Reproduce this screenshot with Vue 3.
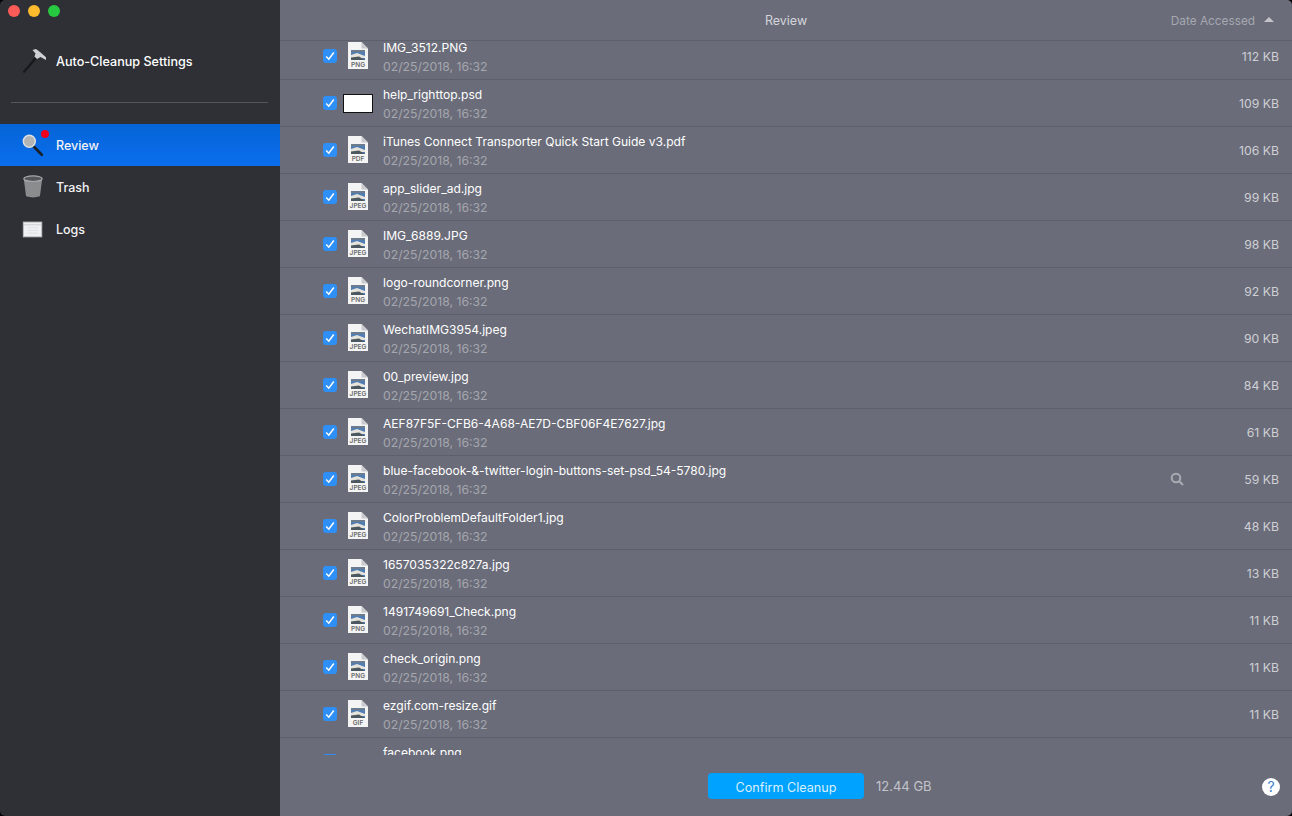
<template>
  <div class="window">
    <aside class="sidebar">
      <div class="traffic">
        <span class="light light--red"></span>
        <span class="light light--yellow"></span>
        <span class="light light--green"></span>
      </div>

      <div class="settings">
        <svg class="settings__icon" width="26" height="26" viewBox="0 0 26 26">
          <path d="M2.5 24 L4.5 25 L17 10.5 L15 9 Z" fill="#17181b" />
          <path d="M12.5 2 L16 1 L20 4 L27 10 L26 12 L20.5 9 L17 11 L14.5 8.5 L15.5 5.5 Z" fill="#cfd0d3" />
        </svg>
        <span>Auto-Cleanup Settings</span>
      </div>

      <div class="sidebar__line"></div>

      <nav class="nav">
        <div class="nav__item nav__item--active">
          <span class="nav__icon">
            <svg width="26" height="26" viewBox="0 0 26 26">
              <path d="M14 15 L22.5 23.5" stroke="#18202c" stroke-width="3" stroke-linecap="round" />
              <circle cx="9" cy="9" r="6.5" fill="#b2b4b6" stroke="#dfe0e2" stroke-width="1.5" />
            </svg>
            <span class="nav__badge"></span>
          </span>
          Review
        </div>
        <div class="nav__item">
          <span class="nav__icon">
            <svg width="26" height="26" viewBox="0 0 26 26">
              <path d="M3 4 L23 4 L20.5 23 Q13 25.5 5.5 23 Z" fill="#8b8c8e" />
              <ellipse cx="13" cy="4" rx="10" ry="3" fill="#55565a" stroke="#a9aaac" stroke-width="1.2" />
            </svg>
          </span>
          Trash
        </div>
        <div class="nav__item">
          <span class="nav__icon">
            <svg width="26" height="26" viewBox="0 0 26 26">
              <rect x="2.5" y="5.5" width="20" height="16" fill="#f1f1f3" stroke="#bdbec2" />
              <path d="M3 8.5 H22" stroke="#c8c9cd" />
              <path d="M7 11.5 H19 M7 14.5 H19 M7 17.5 H19" stroke="#dcdde0" />
            </svg>
          </span>
          Logs
        </div>
      </nav>
    </aside>

    <main class="main">
      <header class="head">
        <span class="head__title">Review</span>
        <span class="head__sort">
          Date Accessed
          <i class="head__arrow"></i>
        </span>
      </header>

      <div class="list">
        <div class="list__inner">
          <div class="row" v-for="file in files" :key="file.name">
            <span class="check">
              <svg width="10" height="10" viewBox="0 0 10 10">
                <path d="M1.2 5.5 L3.8 8.2 L8.8 1.5" fill="none" stroke="#fff" stroke-width="1.5" />
              </svg>
            </span>
            <span class="thumb">
              <span v-if="file.type === 'blank'" class="thumb__blank"></span>
              <svg v-else-if="file.type" width="20" height="27" viewBox="0 0 20 27">
                <path d="M0 0 H13.5 L20 6.5 V27 H0 Z" fill="#f4f4f5" />
                <path d="M13.5 0 L20 6.5 H13.5 Z" fill="#c9cace" />
                <rect x="3" y="8" width="14" height="10" fill="#4f7db4" />
                <path d="M3 8 H17 V10 H3 Z" fill="#6d7c8c" />
                <path d="M3 13 L9 11 L17 14 V16 H3 Z" fill="#e6e3da" />
                <path d="M3 15.5 L11 14.5 L17 18 H3 Z" fill="#4c5860" />
                <text x="10" y="24.5" text-anchor="middle" class="thumb__label">{{ file.type }}</text>
              </svg>
            </span>
            <div class="row__text">
              <div class="row__name">{{ file.name }}</div>
              <div class="row__date">02/25/2018, 16:32</div>
            </div>
            <svg v-if="file.hover" class="row__search" width="14" height="14" viewBox="0 0 14 14">
              <circle cx="6" cy="6" r="4.3" fill="none" stroke="#a9abb2" stroke-width="2" />
              <path d="M9.2 9.2 L13 13" stroke="#a9abb2" stroke-width="2.2" />
            </svg>
            <span class="row__size">{{ file.size }}</span>
          </div>
        </div>
      </div>

      <footer class="foot">
        <button class="confirm">Confirm Cleanup</button>
        <span class="foot__total">12.44 GB</span>
        <span class="help">?</span>
      </footer>
    </main>
  </div>
</template>

<script setup>
const files = [
  { name: 'IMG_3512.PNG', type: 'PNG', size: '112 KB' },
  { name: 'help_righttop.psd', type: 'blank', size: '109 KB' },
  { name: 'iTunes Connect Transporter Quick Start Guide v3.pdf', type: 'PDF', size: '106 KB' },
  { name: 'app_slider_ad.jpg', type: 'JPEG', size: '99 KB' },
  { name: 'IMG_6889.JPG', type: 'JPEG', size: '98 KB' },
  { name: 'logo-roundcorner.png', type: 'PNG', size: '92 KB' },
  { name: 'WechatIMG3954.jpeg', type: 'JPEG', size: '90 KB' },
  { name: '00_preview.jpg', type: 'JPEG', size: '84 KB' },
  { name: 'AEF87F5F-CFB6-4A68-AE7D-CBF06F4E7627.jpg', type: 'JPEG', size: '61 KB' },
  { name: 'blue-facebook-&-twitter-login-buttons-set-psd_54-5780.jpg', type: 'JPEG', size: '59 KB', hover: true },
  { name: 'ColorProblemDefaultFolder1.jpg', type: 'JPEG', size: '48 KB' },
  { name: '1657035322c827a.jpg', type: 'JPEG', size: '13 KB' },
  { name: '1491749691_Check.png', type: 'PNG', size: '11 KB' },
  { name: 'check_origin.png', type: 'PNG', size: '11 KB' },
  { name: 'ezgif.com-resize.gif', type: 'GIF', size: '11 KB' },
  { name: 'facebook.png', type: '', size: '' }
]
</script>

<style>
html,
body {
  margin: 0;
  background: #000;
  overflow: hidden;
}
</style>

<style scoped>
.window {
  display: flex;
  width: 1292px;
  height: 816px;
  border-radius: 5px;
  overflow: hidden;
  font-family: Inter, 'Liberation Sans', sans-serif;
  font-size: 12.5px;
}

/* Sidebar */
.sidebar {
  flex: 0 0 280px;
  background: #2f3036;
  color: #fff;
}

.traffic {
  display: flex;
  gap: 8px;
  padding: 5px 0 0 8px;
  height: 17px;
}

.light {
  width: 12px;
  height: 12px;
  border-radius: 50%;
}

.light--red { background: #fc5b57; }
.light--yellow { background: #fdbb2e; }
.light--green { background: #27c940; }

.settings {
  display: flex;
  align-items: center;
  gap: 10px;
  height: 26px;
  margin-top: 26px;
  padding-left: 20px;
  font-size: 12.6px;
  font-weight: 500;
}

.sidebar__line {
  height: 1px;
  margin: 28px 12px 21px 11px;
  background: #55565b;
}

.nav__item {
  display: flex;
  align-items: center;
  gap: 11px;
  height: 42px;
  padding-left: 21px;
  font-weight: 500;
  color: #f2f2f4;
}

.nav__item--active {
  background: linear-gradient(#0564d6, #0a6eee);
}

.nav__icon {
  position: relative;
  display: flex;
  width: 24px;
  height: 26px;
}

.nav__badge {
  position: absolute;
  top: -2px;
  left: 20px;
  width: 8px;
  height: 8px;
  border-radius: 50%;
  background: #f0001c;
}

/* Main */
.main {
  position: relative;
  display: flex;
  flex-direction: column;
  flex: 1;
  background: #6a6c79;
  color: #fff;
}

.head {
  position: relative;
  display: flex;
  flex: 0 0 40px;
  align-items: center;
  justify-content: center;
  border-bottom: 1px solid #5d5f6b;
}

.head__title {
  color: #d4d5da;
}

.head__sort {
  position: absolute;
  right: 18px;
  display: flex;
  align-items: center;
  gap: 9px;
  padding-top: 1px;
  font-size: 11.8px;
  color: #a6a8b0;
}

.head__arrow {
  width: 0;
  height: 0;
  border-left: 5px solid transparent;
  border-right: 5px solid transparent;
  border-bottom: 5px solid #c3c4ca;
  margin-top: -3px;
}

.list {
  height: 714px;
  overflow: hidden;
}

.list__inner {
  margin-top: -8px;
}

.row {
  display: flex;
  align-items: center;
  height: 46px;
  border-bottom: 1px solid #5d5f6b;
  padding: 0 13px 0 43px;
}

.check {
  display: flex;
  flex: 0 0 14px;
  align-items: center;
  justify-content: center;
  width: 14px;
  height: 14px;
  border-radius: 3px;
  background: #2e8ff6;
}

.thumb {
  display: flex;
  flex: 0 0 30px;
  justify-content: center;
  margin: -2px 10px 0 6px;
}

.thumb__blank {
  width: 28px;
  height: 17px;
  margin-top: 2px;
  background: #fff;
  border: 1px solid #111;
}

.thumb__label {
  font-size: 6.5px;
  font-weight: 600;
  fill: #6a6a6a;
}

.row__text {
  flex: 1;
  margin-top: 2px;
}

.row__name {
  font-size: 12.05px;
  line-height: 18px;
}

.row__date {
  font-size: 12.25px;
  line-height: 19px;
  color: #a5a7ae;
}

.row__search {
  margin-right: 60px;
}

.row__size {
  font-size: 12.25px;
  color: #cfd0d5;
}

/* Footer */
.foot {
  position: relative;
  display: flex;
  flex: 1;
  align-items: center;
  justify-content: center;
  padding-top: 1px;
}

.confirm {
  width: 156px;
  height: 26px;
  padding: 2px 0 0;
  border: none;
  border-radius: 4px;
  background: #00a2ff;
  color: #d9effd;
  font: inherit;
  font-size: 12.6px;
}

.foot__total {
  position: absolute;
  left: 596px;
  color: #c3c4ca;
  font-size: 13px;
}

.help {
  position: absolute;
  right: 12px;
  top: 50%;
  width: 18px;
  height: 18px;
  margin-top: -8px;
  border-radius: 50%;
  background: #fff;
  color: #3a80d2;
  font-size: 14px;
  line-height: 18px;
  text-align: center;
}
</style>
